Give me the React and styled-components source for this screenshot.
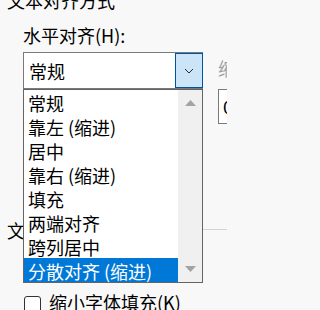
import React from "react";
import styled, { createGlobalStyle } from "styled-components";

const GlobalStyle = createGlobalStyle`
  html, body {
    margin: 0;
    padding: 0;
    overflow: hidden;
    background: #f8f8f8;
  }
  body {
    font-family: "Noto Sans CJK SC", "Microsoft YaHei", sans-serif;
    color: #000;
  }
`;

const horizontalOptions = [
  "常规",
  "靠左 (缩进)",
  "居中",
  "靠右 (缩进)",
  "填充",
  "两端对齐",
  "跨列居中",
  "分散对齐 (缩进)",
];

const Viewport = styled.div`
  width: 227px;
  height: 310px;
  overflow: hidden;
  background: #f8f8f8;
`;

const Page = styled.div`
  margin-top: -12px;
  padding-left: 7px;
  width: 300px;
`;

const GroupTitle = styled.div`
  display: flex;
  align-items: center;
  font-size: 18px;
  line-height: 24px;
  margin-top: ${({ $top }) => $top || 0}px;
`;

const Rule = styled.div`
  flex: 1;
  height: 1px;
  margin: 0 0 1px 8px;
  background: #d4d4d4;
`;

const Grid = styled.div`
  display: grid;
  grid-template-columns: 180px 80px;
  column-gap: 15px;
  margin: 11px 0 0 16px;
  align-items: start;
`;

const Label = styled.div`
  font-size: 18px;
  line-height: 24px;
  color: ${({ $disabled }) => ($disabled ? "#9d9d9d" : "#000")};
  margin-top: ${({ $top }) => $top || 0}px;
  white-space: nowrap;
`;

const SideLabel = styled(Label)`
  align-self: center;
`;

const SelectWrap = styled.div`
  position: relative;
  margin-top: ${({ $top }) => $top || 0}px;
`;

const SelectBox = styled.div`
  box-sizing: border-box;
  height: 37px;
  display: flex;
  align-items: center;
  justify-content: space-between;
  padding-left: 5px;
  border: 1px solid #7a7a7a;
  background: #fff;
  font-size: 18px;
  line-height: 24px;
`;

const DropButton = styled.div`
  box-sizing: border-box;
  width: 28px;
  height: 35px;
  margin-right: -1px;
  display: flex;
  align-items: center;
  justify-content: center;
  background: #cce4f7;
  border: 1px solid #005499;
`;

const DropList = styled.div`
  position: absolute;
  left: 0;
  right: 0;
  top: 100%;
  z-index: 10;
  display: flex;
  border: 1px solid #646464;
  background: #fff;
`;

const Options = styled.div`
  flex: 1;
`;

const Option = styled.div`
  height: 24px;
  box-sizing: border-box;
  padding: 1px 0 0 4px;
  font-size: 18px;
  line-height: 24px;
  white-space: nowrap;
  background: ${({ $selected }) => ($selected ? "#0078d7" : "transparent")};
  color: ${({ $selected }) => ($selected ? "#fff" : "#000")};
`;

const ScrollBar = styled.div`
  width: 24px;
  display: flex;
  flex-direction: column;
  justify-content: space-between;
  background: #f0f0f0;
`;

const ScrollArrow = styled.div`
  height: 26px;
  display: flex;
  align-items: center;
  justify-content: center;
`;

const SpinBox = styled.div`
  box-sizing: border-box;
  width: 80px;
  height: 35px;
  border: 1px solid #7a7a7a;
  background: #fff;
  padding-left: 4px;
  font-size: 18px;
  line-height: 33px;
`;

const CheckList = styled.div`
  display: flex;
  flex-direction: column;
  gap: 10px;
  margin: 14px 0 0 17px;
`;

const CheckRow = styled.label`
  display: flex;
  align-items: center;
  gap: 8px;
  height: 24px;
  font-size: 18px;
  line-height: 24px;
  white-space: nowrap;
`;

const CheckBox = styled.span`
  box-sizing: border-box;
  width: 17px;
  height: 17px;
  border: 1px solid #333;
  border-radius: 3px;
  background: #fff;
  margin-top: 4px;
`;

const Chevron = () => (
  <svg width="10" height="6" viewBox="0 0 10 6">
    <path d="M1 1l4 4 4-4" fill="none" stroke="#2b2b2b" strokeWidth="1" />
  </svg>
);

const Triangle = ({ down }) => (
  <svg width="11" height="6" viewBox="0 0 11 6">
    <path d={down ? "M0 0h11L5.5 6z" : "M0 6h11L5.5 0z"} fill="#a3a3a3" />
  </svg>
);

export default function App() {
  return (
    <>
      <GlobalStyle />
      <Viewport>
        <Page>
          <GroupTitle>文本对齐方式</GroupTitle>
          <Grid>
            <Label>水平对齐(H):</Label>
            <div />
            <SelectWrap $top={5}>
              <SelectBox>
                常规
                <DropButton>
                  <Chevron />
                </DropButton>
              </SelectBox>
              <DropList>
                <Options>
                  {horizontalOptions.map((opt, i) => (
                    <Option key={opt} $selected={i === horizontalOptions.length - 1}>
                      {opt}
                    </Option>
                  ))}
                </Options>
                <ScrollBar>
                  <ScrollArrow>
                    <Triangle />
                  </ScrollArrow>
                  <ScrollArrow>
                    <Triangle down />
                  </ScrollArrow>
                </ScrollBar>
              </DropList>
            </SelectWrap>
            <SideLabel $disabled>缩进(I):</SideLabel>
            <div>
              <Label $top={6}>垂直对齐(V):</Label>
              <SelectWrap $top={5}>
                <SelectBox>
                  居中
                  <DropButton>
                    <Chevron />
                  </DropButton>
                </SelectBox>
              </SelectWrap>
            </div>
            <SpinBox>0</SpinBox>
          </Grid>
          <GroupTitle $top={57}>
            文本控制
            <Rule />
          </GroupTitle>
          <CheckList>
            <CheckRow>
              <CheckBox />
              自动换行(W)
            </CheckRow>
            <CheckRow>
              <CheckBox />
              缩小字体填充(K)
            </CheckRow>
          </CheckList>
        </Page>
      </Viewport>
    </>
  );
}
